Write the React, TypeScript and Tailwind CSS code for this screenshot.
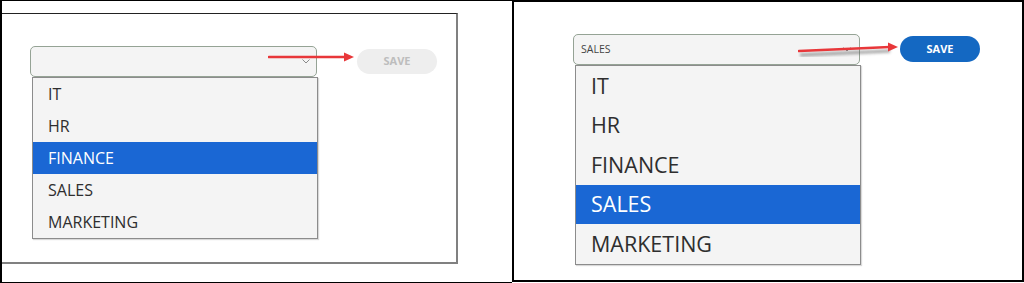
import React from 'react'

const departments = ['IT', 'HR', 'FINANCE', 'SALES', 'MARKETING']

function Chevron({className}: {className?: string}) {
  return (
    <svg className={className} width="8" height="5" viewBox="0 0 8 5" fill="none">
      <path d="M0.5 0.5L4 4L7.5 0.5" stroke="#8a8a8a" strokeWidth="1" />
    </svg>
  )
}

// red callout arrow pasted over the screenshot, with its soft grey shadow
function RedArrow({width, rise = 0, className}: {width: number; rise?: number; className?: string}) {
  const h = 20
  const y0 = 8 + rise
  const y1 = 8
  return (
    <svg className={className} width={width + 4} height={h} viewBox={`0 0 ${width + 4} ${h}`} fill="none">
      <defs>
        <filter id={`sh${width}`} x="-10%" y="-50%" width="120%" height="200%">
          <feGaussianBlur stdDeviation="1.6" />
        </filter>
      </defs>
      <g filter={`url(#sh${width})`} opacity="0.55">
        <line x1="2" y1={y0 + 4} x2={width - 8} y2={y1 + 4} stroke="#555" strokeWidth="3" />
      </g>
      <line x1="1" y1={y0} x2={width - 8} y2={y1} stroke="#e8373a" strokeWidth="2.6" strokeLinecap="round" />
      <path d={`M${width - 10} ${y1 - 4.5}L${width} ${y1}L${width - 10} ${y1 + 4.5}Z`} fill="#e8373a" />
    </svg>
  )
}

function OptionList({selected, itemClass, textClass}: {selected: string; itemClass: string; textClass: string}) {
  return (
    <div className="ml-[2px] w-[286px] border border-[#8c8c8c] bg-[#f4f4f4] shadow-[1px_1px_1px_rgba(0,0,0,0.15)]">
      {departments.map(d => (
        <div
          key={d}
          className={`flex items-center pl-[15px] ${itemClass} ${textClass} ${
            d === selected ? 'bg-[#1a67d4] text-white' : 'text-[#2e2e2e]'
          }`}
        >
          {d}
        </div>
      ))}
    </div>
  )
}

export default function App() {
  return (
    <div className="flex h-[283px] w-[1024px] bg-white font-['Open_Sans','Noto_Sans',sans-serif]">
      {/* left capture: empty select, FINANCE highlighted, disabled save */}
      <div className="h-[283px] w-[512px] border-y border-l-2 border-black">
        <div className="mt-[12px] h-[251px] w-[456px] border-t border-r-2 border-b-2 border-t-[#222] border-r-[#808080] border-b-[#808080]">
          <div className="pl-[28px] pt-[32px]">
            <div className="relative flex items-start">
              <div className="flex h-[31px] w-[287px] items-center justify-end rounded-[5px] border border-[#95a395] bg-[#f4f4f4] pr-[6px]">
                <Chevron />
              </div>
              <button
                type="button"
                className="ml-[40px] mt-[3px] flex h-[25px] w-[80px] items-center justify-center rounded-full bg-[#eeeeee] text-[11px] font-bold text-[#bdbdbd]"
              >
                SAVE
              </button>
              <RedArrow width={86} className="absolute left-[238px] top-[3px]" />
            </div>
            <OptionList selected="FINANCE" itemClass="h-[32px]" textClass="text-[16px]" />
          </div>
        </div>
      </div>

      {/* right capture: SALES chosen, save enabled */}
      <div className="h-[282px] w-[512px] border-2 border-black">
        <div className="pl-[59px] pt-[32px]">
          <div className="relative flex items-start">
            <div className="flex h-[31px] w-[287px] items-center justify-between rounded-[5px] border border-[#95a395] bg-[#f4f4f4] pl-[7px] pr-[8px]">
              <span className="text-[10.5px] text-[#444]">SALES</span>
              <Chevron />
            </div>
            <button
              type="button"
              className="ml-[40px] mt-[2px] flex h-[26px] w-[80px] items-center justify-center rounded-full bg-[#1468c2] text-[11px] font-bold text-white"
            >
              SAVE
            </button>
            <RedArrow width={100} rise={4} className="absolute left-[225px] top-[5px]" />
          </div>
          <OptionList selected="SALES" itemClass="h-[39.6px]" textClass="text-[21.5px]" />
        </div>
      </div>
    </div>
  )
}
